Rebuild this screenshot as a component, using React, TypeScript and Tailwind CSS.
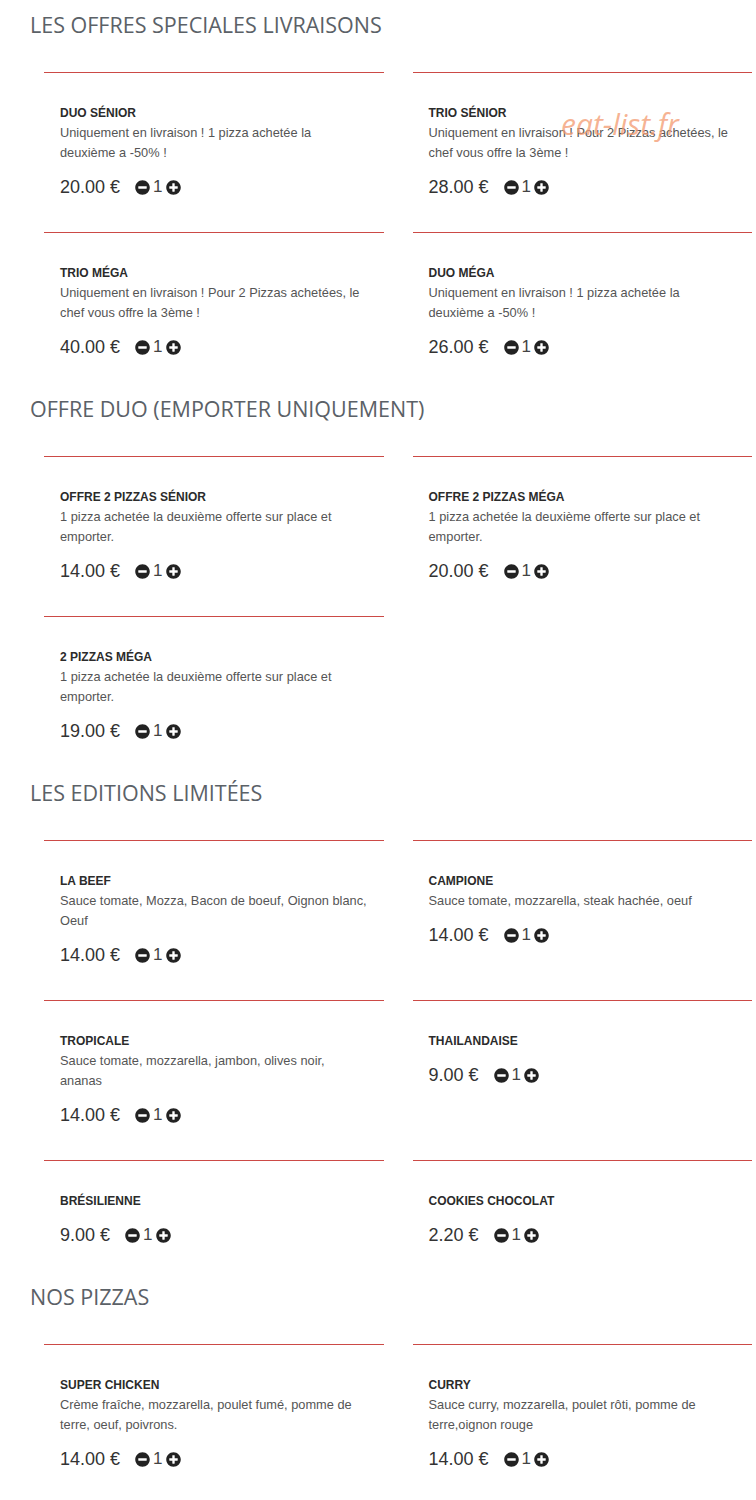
import { FaMinusCircle, FaPlusCircle } from "react-icons/fa";

type Item = {
    name: string;
    desc?: string;
    price: string;
};

type Section = {
    title: string;
    items: Item[];
};

const sections: Section[] = [
    {
        title: "LES OFFRES SPECIALES LIVRAISONS",
        items: [
            { name: "DUO SÉNIOR", desc: "Uniquement en livraison ! 1 pizza achetée la deuxième a -50% !", price: "20.00" },
            { name: "TRIO SÉNIOR", desc: "Uniquement en livraison ! Pour 2 Pizzas achetées, le chef vous offre la 3ème !", price: "28.00" },
            { name: "TRIO MÉGA", desc: "Uniquement en livraison ! Pour 2 Pizzas achetées, le chef vous offre la 3ème !", price: "40.00" },
            { name: "DUO MÉGA", desc: "Uniquement en livraison ! 1 pizza achetée la deuxième a -50% !", price: "26.00" },
        ],
    },
    {
        title: "OFFRE DUO (EMPORTER UNIQUEMENT)",
        items: [
            { name: "OFFRE 2 PIZZAS SÉNIOR", desc: "1 pizza achetée la deuxième offerte sur place et emporter.", price: "14.00" },
            { name: "OFFRE 2 PIZZAS MÉGA", desc: "1 pizza achetée la deuxième offerte sur place et emporter.", price: "20.00" },
            { name: "2 PIZZAS MÉGA", desc: "1 pizza achetée la deuxième offerte sur place et emporter.", price: "19.00" },
        ],
    },
    {
        title: "LES EDITIONS LIMITÉES",
        items: [
            { name: "LA BEEF", desc: "Sauce tomate, Mozza, Bacon de boeuf, Oignon blanc, Oeuf", price: "14.00" },
            { name: "CAMPIONE", desc: "Sauce tomate, mozzarella, steak hachée, oeuf", price: "14.00" },
            { name: "TROPICALE", desc: "Sauce tomate, mozzarella, jambon, olives noir, ananas", price: "14.00" },
            { name: "THAILANDAISE", price: "9.00" },
            { name: "BRÉSILIENNE", price: "9.00" },
            { name: "COOKIES CHOCOLAT", price: "2.20" },
        ],
    },
    {
        title: "NOS PIZZAS",
        items: [
            { name: "SUPER CHICKEN", desc: "Crème fraîche, mozzarella, poulet fumé, pomme de terre, oeuf, poivrons.", price: "14.00" },
            { name: "CURRY", desc: "Sauce curry, mozzarella, poulet rôti, pomme de terre,oignon rouge", price: "14.00" },
        ],
    },
];

const MenuCard = ({ item }: { item: Item }) => (
    <div className="border-t border-[#cc4a46] pl-4 pr-[15px] pt-[30px] pb-[33px]">
        <h4 className="text-[12px] leading-[20px] font-bold text-[#2b2b2b]">{item.name}</h4>
        {item.desc && <p className="text-[12.8px] leading-[20px] text-[#555]">{item.desc}</p>}
        <div className="mt-3 flex h-6 items-center text-[#333]">
            <span className="text-[18px] leading-6">{item.price} €</span>
            <div className="ml-[15px] flex items-center gap-[3px]">
                <FaMinusCircle size={15} color="#222" />
                <span className="text-[17px] leading-6 text-[#444]">1</span>
                <FaPlusCircle size={15} color="#222" />
            </div>
        </div>
    </div>
);

export default function App() {
    return (
        <div className="relative min-h-[1500px] bg-white pt-[10px]" style={{ fontFamily: '"Liberation Sans", Arial, sans-serif' }}>
            {sections.map((s, i) => (
                <section key={i} className={i > 0 ? "mt-[2px]" : ""}>
                    <h2
                        className="px-[30px] text-[21.5px] leading-[30px] text-[#5b6167] mb-[32px]"
                        style={{ fontFamily: '"Open Sans", sans-serif' }}
                    >
                        {s.title}
                    </h2>
                    <div className="grid grid-cols-2 gap-x-[29px] pl-[44px] pr-[4px]">
                        {s.items.map((it, j) => (
                            <MenuCard key={j} item={it} />
                        ))}
                    </div>
                </section>
            ))}
            <span
                className="absolute left-[561px] top-[101px] text-[30px] italic text-[#f39a70]/75"
                style={{ fontFamily: '"Open Sans", sans-serif' }}
            >
                eat-list.fr
            </span>
        </div>
    );
}
